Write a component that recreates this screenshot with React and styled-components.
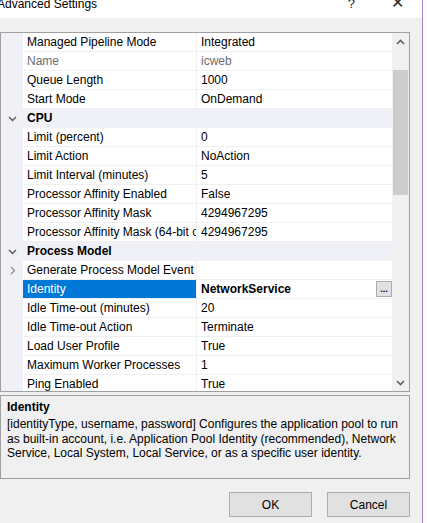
import React from 'react';
import styled, { createGlobalStyle } from 'styled-components';

const GlobalStyle = createGlobalStyle`
  html, body {
    margin: 0;
    padding: 0;
    background: #ffffff;
    font-family: 'Liberation Sans', Arial, sans-serif;
    font-size: 12px;
    color: #000;
  }
`;

const Window = styled.div`
  width: 422px;
  height: 523px;
  background: #f0f0f0;
  border-right: 1px solid #b47fcc;
  display: flex;
  flex-direction: column;
  overflow: hidden;
`;

const TitleBar = styled.div`
  height: 18px;
  background: #ffffff;
  display: flex;
  align-items: flex-start;
  overflow: hidden;
`;

const Title = styled.span`
  margin: -4px 0 0 -3px;
  font-size: 12px;
  line-height: 16px;
`;

const TitleButtons = styled.div`
  margin-left: auto;
  margin-right: 18px;
  display: flex;
  gap: 36px;
`;

const TitleButton = styled.span`
  margin-top: ${p => p.$top}px;
  font-size: ${p => p.$size}px;
  line-height: 16px;
  color: #222;
`;

const Body = styled.div`
  padding: 14px 12px 0 0;
  display: flex;
  flex-direction: column;
`;

const Grid = styled.div`
  height: 358px;
  border: 1px solid #a0a0a0;
  background: #ffffff;
  display: flex;
  overflow: hidden;
`;

const List = styled.div`
  flex: 1;
  overflow: hidden;
`;

const Row = styled.div`
  display: grid;
  grid-template-columns: 22px 173px 1px 1fr;
  height: 19px;
  background: ${p => (p.$category ? '#f0f1f6' : '#ffffff')};
`;

const Gutter = styled.div`
  background: #f0f1f6;
  display: flex;
  align-items: center;
  justify-content: center;
  padding-left: 1px;
`;

const NameCell = styled.div`
  box-sizing: border-box;
  border-bottom: 1px solid #f0f0f0;
  padding: 0 0 0 4px;
  line-height: 18px;
  white-space: nowrap;
  overflow: hidden;
  background: ${p => (p.$selected ? '#0078d7' : 'transparent')};
  color: ${p => (p.$selected ? '#ffffff' : p.$dim ? '#6d6d6d' : '#000')};
`;

const Split = styled.div`
  background: #f0f0f0;
`;

const ValueCell = styled.div`
  box-sizing: border-box;
  border-bottom: 1px solid #f0f0f0;
  padding: 0 0 0 4px;
  line-height: 18px;
  white-space: nowrap;
  overflow: hidden;
  display: flex;
  align-items: center;
  color: ${p => (p.$dim ? '#6d6d6d' : '#000')};
  font-weight: ${p => (p.$bold ? 700 : 400)};
`;

const CategoryLabel = styled.div`
  grid-column: 2 / span 3;
  padding-left: 4px;
  line-height: 19px;
  font-weight: 700;
`;

const EllipsisButton = styled.button`
  margin-left: auto;
  margin-right: 0;
  width: 16px;
  height: 16px;
  padding: 0;
  border: 1px solid #adadad;
  background: #e1e1e1;
  font: 700 9px 'Liberation Sans', sans-serif;
  line-height: 10px;
  color: #000;
`;

const Scrollbar = styled.div`
  width: 17px;
  background: #f0f0f0;
  display: flex;
  flex-direction: column;
  align-items: center;
`;

const ScrollArrow = styled.div`
  height: 17px;
  width: 17px;
  display: flex;
  align-items: center;
  justify-content: center;
`;

const ScrollTrack = styled.div`
  flex: 1;
  width: 100%;
  padding: 20px 0 0 1px;
  box-sizing: border-box;
`;

const Thumb = styled.div`
  width: 15px;
  height: 125px;
  background: #cdcdcd;
`;

const Description = styled.div`
  margin-top: 3px;
  height: 78px;
  border: 1px solid #a0a0a0;
  background: #f0f0f0;
  padding: 4px 6px 0 6px;
  overflow: hidden;
`;

const DescTitle = styled.div`
  font-weight: 700;
  line-height: 15px;
  margin-bottom: 2px;
`;

const DescText = styled.div`
  line-height: 14.5px;
`;

const ButtonRow = styled.div`
  display: flex;
  justify-content: flex-end;
  gap: 15px;
  margin-top: 13px;
`;

const DialogButton = styled.button`
  width: 83px;
  height: 25px;
  background: #e1e1e1;
  border: 1px solid #adadad;
  font: 12px 'Liberation Sans', Arial, sans-serif;
  color: #000;
  padding: 0;
`;

const ChevronDown = () => (
  <svg width="9" height="6" viewBox="0 0 9 6">
    <polyline points="1,1 4.5,4.5 8,1" fill="none" stroke="#555" strokeWidth="1.3" />
  </svg>
);

const ChevronRight = () => (
  <svg width="6" height="9" viewBox="0 0 6 9">
    <polyline points="1,1 4.5,4.5 1,8" fill="none" stroke="#888" strokeWidth="1.2" />
  </svg>
);

const ArrowUp = () => (
  <svg width="9" height="6" viewBox="0 0 9 6">
    <polyline points="1,5 4.5,1.5 8,5" fill="none" stroke="#606060" strokeWidth="1.6" />
  </svg>
);

const ArrowDown = () => (
  <svg width="9" height="6" viewBox="0 0 9 6">
    <polyline points="1,1 4.5,4.5 8,1" fill="none" stroke="#606060" strokeWidth="1.6" />
  </svg>
);

const rows = [
  { name: 'Managed Pipeline Mode', value: 'Integrated' },
  { name: 'Name', value: 'icweb', dim: true },
  { name: 'Queue Length', value: '1000' },
  { name: 'Start Mode', value: 'OnDemand' },
  { category: 'CPU' },
  { name: 'Limit (percent)', value: '0' },
  { name: 'Limit Action', value: 'NoAction' },
  { name: 'Limit Interval (minutes)', value: '5' },
  { name: 'Processor Affinity Enabled', value: 'False' },
  { name: 'Processor Affinity Mask', value: '4294967295' },
  { name: 'Processor Affinity Mask (64-bit option)', value: '4294967295' },
  { category: 'Process Model' },
  { name: 'Generate Process Model Event Log Entry', value: '', expand: true },
  { name: 'Identity', value: 'NetworkService', selected: true },
  { name: 'Idle Time-out (minutes)', value: '20' },
  { name: 'Idle Time-out Action', value: 'Terminate' },
  { name: 'Load User Profile', value: 'True' },
  { name: 'Maximum Worker Processes', value: '1' },
  { name: 'Ping Enabled', value: 'True' },
];

export default function App() {
  return (
    <>
      <GlobalStyle />
      <Window>
        <TitleBar>
          <Title>Advanced Settings</Title>
          <TitleButtons>
            <TitleButton $size={13} $top={-4}>?</TitleButton>
            <TitleButton $size={16} $top={-5}>✕</TitleButton>
          </TitleButtons>
        </TitleBar>
        <Body>
          <Grid>
            <List>
              {rows.map((r, i) =>
                r.category ? (
                  <Row key={i} $category>
                    <Gutter><ChevronDown /></Gutter>
                    <CategoryLabel>{r.category}</CategoryLabel>
                  </Row>
                ) : (
                  <Row key={i}>
                    <Gutter>{r.expand && <ChevronRight />}</Gutter>
                    <NameCell $selected={r.selected} $dim={r.dim}>{r.name}</NameCell>
                    <Split />
                    <ValueCell $dim={r.dim} $bold={r.selected}>
                      {r.value}
                      {r.selected && <EllipsisButton>...</EllipsisButton>}
                    </ValueCell>
                  </Row>
                )
              )}
            </List>
            <Scrollbar>
              <ScrollArrow><ArrowUp /></ScrollArrow>
              <ScrollTrack><Thumb /></ScrollTrack>
              <ScrollArrow><ArrowDown /></ScrollArrow>
            </Scrollbar>
          </Grid>
          <Description>
            <DescTitle>Identity</DescTitle>
            <DescText>
              [identityType, username, password] Configures the application pool to run as built-in account, i.e. Application Pool Identity (recommended), Network Service, Local System, Local Service, or as a specific user identity.
            </DescText>
          </Description>
          <ButtonRow>
            <DialogButton>OK</DialogButton>
            <DialogButton>Cancel</DialogButton>
          </ButtonRow>
        </Body>
      </Window>
    </>
  );
}
